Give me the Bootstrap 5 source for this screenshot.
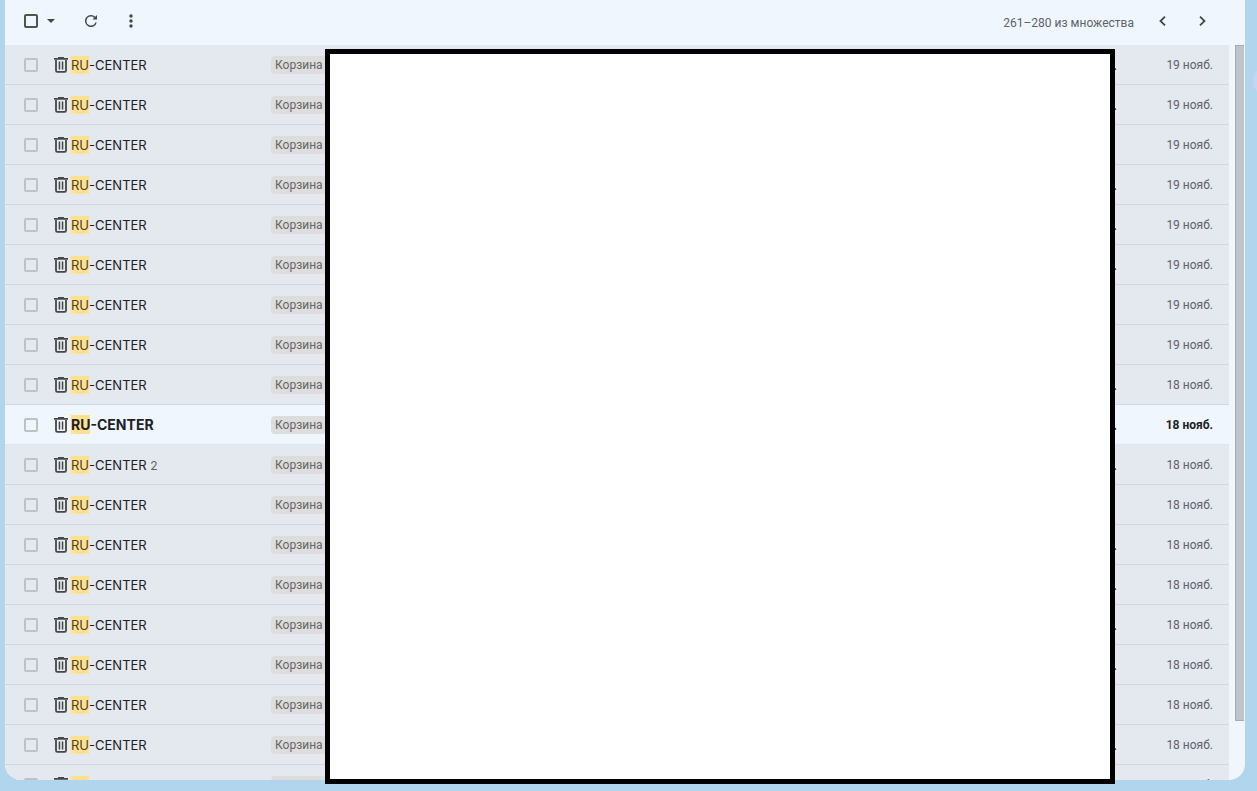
<!DOCTYPE html>
<html lang="ru">
<head>
<meta charset="utf-8">
<meta name="viewport" content="width=device-width, initial-scale=1">
<title>Почта</title>
<link href="https://cdn.jsdelivr.net/npm/bootstrap@5.3.0/dist/css/bootstrap.min.css" rel="stylesheet">
<style>
body{background:#b0d5ec;font-family:Inter,"Liberation Sans",sans-serif;font-size:13px;line-height:18px;color:#202124}
.mail-shell{height:100vh;padding:0 12px 11px 5px}
.mail-panel{background:#eff6fd;border-radius:0 0 16px 16px}
.tools{height:45px;padding:0 23px 3px 19px;color:#444746}
.tick{appearance:none;width:14px;height:14px;border:2px solid #bec2c5;border-radius:2px;background:transparent;margin:0;display:block}
.tick:checked{background:#444746}
.tools .tick{border-color:#505352}
.tool-btn{border:0;background:transparent;color:inherit;padding:0;display:flex;align-items:center;justify-content:center;width:40px;height:40px}
.tool-btn.caret{width:26px}
.tool-btn.reload{margin-left:7px}
.pager{font-family:Roboto,sans-serif;font-size:12px;color:#5f6368}
.mail-list{table-layout:fixed;border-collapse:separate;border-spacing:0;width:100%}
.mail-list td{height:40px;padding:0;border-bottom:1px solid #cfd8e1;background:#e4e8ef;vertical-align:middle;white-space:nowrap;overflow:hidden}
.mail-list .unread td{background:#eff6fd;border-color:#dde5ed;font-weight:700}
.mail-list .unread .sender{font-size:14px}
.mail-list .unread .tag{font-weight:400}
.c-tick{width:49px}.c-name{width:217px}.c-stamp{width:112px}
.mail-list td.tick-cell{padding-left:19px}
.mail-list td.stamp{padding:1px 16px 0 0;text-align:right;font-family:Roboto,sans-serif;font-size:12px;color:#5f6368}
.mail-list .unread td.stamp{color:#202124}
.sender{padding-top:1px}
.hit{background:#ffe08f;color:#4d4326;padding:1px 0}
.unread .hit{color:#202124}
.thread{font-size:12px;color:#5f6368}
.tag{background:#ddd;color:#666;border-radius:4px;font-size:12px;line-height:18px;padding:0 4px;font-family:Roboto,sans-serif}
.bin{color:#444746;margin-right:3px}
.scroll-track{width:16px;padding-left:6px}
.scroll-thumb{width:9px;height:92%;background:#bfc4c8;border:1px solid #a6abaf;border-right:0}
.cover{position:absolute;top:49px;bottom:7px;left:325px;right:142px;background:#fff;border:5px solid #000}
.side-dot{position:absolute;right:-28px;top:65px;width:32px;height:32px;border-radius:50%;background:#c5d5f3}
</style>
</head>
<body class="overflow-hidden">
<svg class="d-none" aria-hidden="true">
<symbol id="bin" viewBox="0 0 14 16"><path fill="none" stroke="currentColor" stroke-width="1.800" d="M0 1.900h14M2 3v10.600q0 1.300 1.300 1.300h7.400q1.300 0 1.300-1.300V3"/><path fill="currentColor" d="M4 0h6v2H4zM4.700 4.500h1.500v8H4.700zM7.800 4.500h1.500v8H7.800z"/></symbol>
</svg>
<main class="mail-shell position-relative">
<section class="mail-panel h-100 d-flex flex-column overflow-hidden">
<header class="tools d-flex align-items-center flex-shrink-0">
<input class="tick" type="checkbox" aria-label="Выбрать все">
<button class="tool-btn caret" type="button" aria-label="Варианты выбора"><svg width="8" height="4"><path d="M0 0h8L4 4z" fill="currentColor"/></svg></button>
<button class="tool-btn reload" type="button" aria-label="Обновить"><svg width="18" height="18" viewBox="0 0 24 24" fill="currentColor"><path d="M17.650 6.350A8 8 0 1 0 19.730 14h-2.080A6 6 0 1 1 12 6c1.660 0 3.140.690 4.220 1.780L14 10h6V4z"/></svg></button>
<button class="tool-btn" type="button" aria-label="Ещё"><svg width="4" height="14" fill="currentColor"><circle cx="2" cy="2" r="1.700"/><circle cx="2" cy="7" r="1.700"/><circle cx="2" cy="12" r="1.700"/></svg></button>
<span class="pager ms-auto me-2 pt-1">261–280 из множества</span>
<button class="tool-btn" type="button" aria-label="Назад"><svg width="7" height="10" fill="none" stroke="currentColor" stroke-width="1.800"><path d="M6 .7 1.500 5 6 9.300"/></svg></button>
<button class="tool-btn" type="button" aria-label="Вперёд"><svg width="7" height="10" fill="none" stroke="currentColor" stroke-width="1.800"><path d="M1 .7 5.500 5 1 9.300"/></svg></button>
</header>
<div class="d-flex flex-grow-1 overflow-hidden">
<div class="flex-grow-1 overflow-hidden">
<table class="mail-list">
<colgroup><col class="c-tick"><col class="c-name"><col><col class="c-stamp"></colgroup>
<tbody id="rows"></tbody>
</table>
</div>
<div class="scroll-track flex-shrink-0"><div class="scroll-thumb"></div></div>
</div>
</section>
<div class="cover"></div>
<div class="side-dot"></div>
</main>
<script src="https://cdn.jsdelivr.net/npm/bootstrap@5.3.0/dist/js/bootstrap.bundle.min.js"></script>
<script>
const cut = [0, 1, 3, 4, 5, 8, 9, 10, 12, 13, 14, 15, 17];
document.getElementById('rows').innerHTML = Array.from({length: 19}, (_, i) => `
<tr class="${i === 9 ? 'unread' : ''}">
<td class="tick-cell"><input class="tick" type="checkbox" aria-label="Выбрать письмо ${i + 1}"></td>
<td><div class="sender d-flex align-items-center"><svg class="bin flex-shrink-0" width="14" height="16"><use href="#bin"/></svg><span><mark class="hit">RU</mark>-CENTER${i === 10 ? ' <span class="thread">2</span>' : ''}</span></div></td>
<td><div class="d-flex align-items-center justify-content-between"><span class="tag">Корзина</span><span>${cut.includes(i) ? '.' : ''}</span></div></td>
<td class="stamp">${i < 8 ? 19 : 18} нояб.</td>
</tr>`).join('');
</script>
</body>
</html>
